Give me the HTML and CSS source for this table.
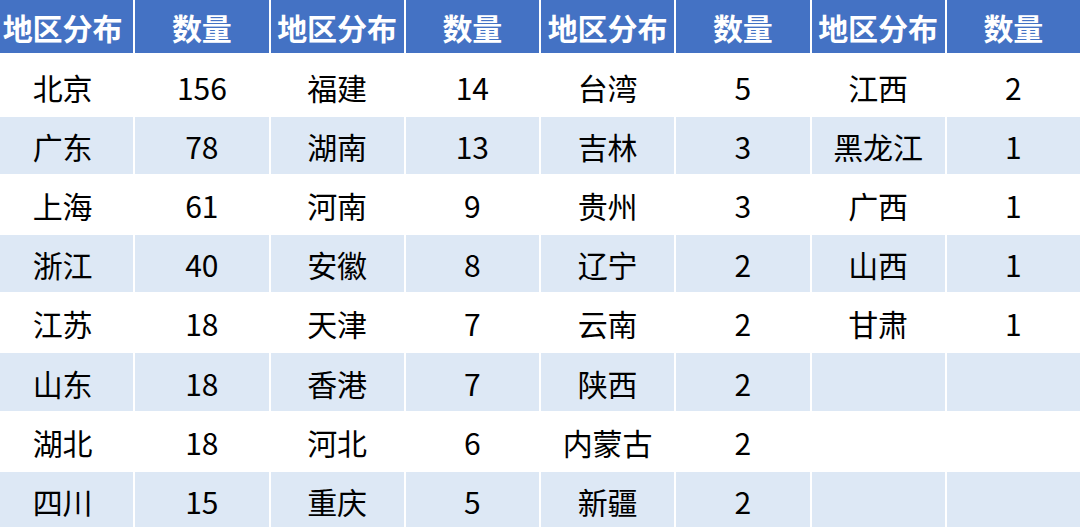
FILE: index.html
```html
<!DOCTYPE html>
<html lang="zh-CN">
<head>
<meta charset="utf-8">
<link rel="stylesheet" href="styles.css">
</head>
<body>
<div class="table">
  <div class="row head">
    <div>地区分布</div><div>数量</div><div>地区分布</div><div>数量</div><div>地区分布</div><div>数量</div><div>地区分布</div><div>数量</div>
  </div>
  <div class="body">
    <div class="row">
      <div>北京</div><div>156</div><div>福建</div><div>14</div><div>台湾</div><div>5</div><div>江西</div><div>2</div>
    </div>
    <div class="row alt">
      <div>广东</div><div>78</div><div>湖南</div><div>13</div><div>吉林</div><div>3</div><div>黑龙江</div><div>1</div>
    </div>
    <div class="row">
      <div>上海</div><div>61</div><div>河南</div><div>9</div><div>贵州</div><div>3</div><div>广西</div><div>1</div>
    </div>
    <div class="row alt">
      <div>浙江</div><div>40</div><div>安徽</div><div>8</div><div>辽宁</div><div>2</div><div>山西</div><div>1</div>
    </div>
    <div class="row">
      <div>江苏</div><div>18</div><div>天津</div><div>7</div><div>云南</div><div>2</div><div>甘肃</div><div>1</div>
    </div>
    <div class="row alt">
      <div>山东</div><div>18</div><div>香港</div><div>7</div><div>陕西</div><div>2</div><div></div><div></div>
    </div>
    <div class="row">
      <div>湖北</div><div>18</div><div>河北</div><div>6</div><div>内蒙古</div><div>2</div><div></div><div></div>
    </div>
    <div class="row alt">
      <div>四川</div><div>15</div><div>重庆</div><div>5</div><div>新疆</div><div>2</div><div></div><div></div>
    </div>
  </div>
</div>
</body>
</html>
```

FILE: styles.css
```css
html, body {
  margin: 0;
  padding: 0;
  background: #ffffff;
}

body {
  width: 1080px;
  height: 527px;
  overflow: hidden;
  font-family: "Noto Sans CJK SC", "Noto Sans", sans-serif;
  color: #000;
}

.table {
  display: flex;
  flex-direction: column;
}

.body {
  display: flex;
  flex-direction: column;
  padding-top: 4px;
}

.row {
  display: grid;
  grid-template-columns: repeat(8, 1fr);
  column-gap: 2px;
  height: 59.1px;
  flex: none;
  box-sizing: border-box;
  padding: 1px 0;
  font-size: 30px;
}

.row > div {
  display: flex;
  align-items: center;
  justify-content: center;
  padding-top: 1px;
  box-sizing: border-box;
}

.row > div:first-child {
  padding-right: 8px;
}

.head {
  height: 53px;
  padding: 0;
  font-weight: 700;
  color: #ffffff;
}

.head > div {
  background: #4472c4;
  padding-top: 1px;
}

.alt > div {
  background: #dde8f5;
}
```
